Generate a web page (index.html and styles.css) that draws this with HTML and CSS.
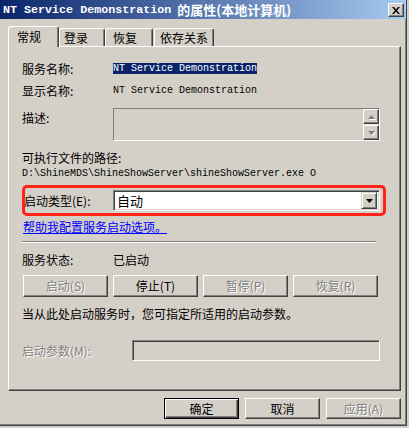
FILE: index.html
```html
<!DOCTYPE html>
<html>
<head>
<meta charset="utf-8">
<link rel="stylesheet" href="styles.css">
</head>
<body>
<div class="window">
  <div class="titlebar">
    <div class="title"><span class="t-mono">NT Service Demonstration</span><span class="t-cjk">的属性(本地计算机)</span></div>
    <div class="close"><svg width="8" height="7" viewBox="0 0 8 7"><path d="M0 0h2l2 2.5L6 0h2L5 3.5 8 7H6L4 4.5 2 7H0l3-3.5z" fill="#000"/></svg></div>
  </div>
  <div class="tabs">
    <div class="tab active w1">常规</div>
    <div class="tab w2">登录</div>
    <div class="tab w3">恢复</div>
    <div class="tab w4">依存关系</div>
  </div>
  <div class="panel">
    <div class="row r-name">
      <div class="label">服务名称:</div>
      <span class="mono sel">NT Service Demonstration</span>
    </div>
    <div class="row r-disp">
      <div class="label">显示名称:</div>
      <span class="mono">NT Service Demonstration</span>
    </div>
    <div class="row r-desc">
      <div class="label top">描述:</div>
      <div class="descbox">
        <div class="scroll">
          <div class="sbtn"><svg width="7" height="4" viewBox="0 0 7 4"><path d="M3.5 0L7 4H0z" fill="#808080"/></svg></div>
          <div class="strack"></div>
          <div class="sbtn"><svg width="7" height="4" viewBox="0 0 7 4"><path d="M0 0h7L3.5 4z" fill="#808080"/></svg></div>
        </div>
      </div>
    </div>
    <div class="line l-pathlabel">可执行文件的路径:</div>
    <div class="line l-path mono">D:\ShineMDS\ShineShowServer\shineShowServer.exe O</div>
    <div class="row r-type">
      <div class="label pad">启动类型(E):</div>
      <div class="combo">
        <span class="combo-text">自动</span>
        <div class="dbtn"><svg width="7" height="4" viewBox="0 0 7 4"><path d="M0 0h7L3.5 4z" fill="#000"/></svg></div>
      </div>
      <div class="redmark"></div>
    </div>
    <div class="line l-link"><a class="link">帮助我配置服务启动选项。</a></div>
    <div class="sep"></div>
    <div class="row r-status">
      <div class="label">服务状态:</div>
      <span>已启动</span>
    </div>
    <div class="btnrow">
      <div class="btn disabled">启动(S)</div>
      <div class="btn">停止(T)</div>
      <div class="btn disabled">暂停(P)</div>
      <div class="btn disabled">恢复(R)</div>
    </div>
    <div class="line l-hint">当从此处启动服务时，您可指定所适用的启动参数。</div>
    <div class="row r-param">
      <div class="label wide disabled-text">启动参数(M):</div>
      <div class="input"></div>
    </div>
  </div>
  <div class="footer">
    <div class="btn fbtn default">确定</div>
    <div class="btn fbtn">取消</div>
    <div class="btn fbtn disabled">应用(A)</div>
  </div>
</div>
</body>
</html>
```
FILE: styles.css
```css
* { box-sizing: border-box; }
html, body { margin: 0; padding: 0; }
body {
  width: 409px;
  height: 428px;
  overflow: hidden;
  background: #d4d0c8;
  font-family: "Noto Sans CJK SC", "Noto Sans", sans-serif;
  font-size: 12px;
  color: #000;
}
.window {
  width: 407px;
  height: 426px;
  border-right: 1px solid #404040;
  border-bottom: 1px solid #404040;
  box-shadow: inset -1px -1px 0 #808080;
}
.titlebar {
  height: 19px;
  width: 406px;
  background: linear-gradient(to right, #0a246a, #a6caf0);
  display: flex;
  align-items: center;
  justify-content: space-between;
  padding: 0 2px 0 3px;
  color: #fff;
  font-weight: bold;
  white-space: nowrap;
}
.title { display: flex; align-items: center; }
.t-mono { font-family: "Liberation Mono", monospace; font-size: 11.7px; font-weight: bold; }
.t-cjk { font-size: 13px; font-weight: bold; margin-left: 6px; }
.close {
  width: 16px;
  height: 14px;
  background: #d4d0c8;
  border: 1px solid;
  border-color: #fff #404040 #404040 #fff;
  box-shadow: inset -1px -1px 0 #808080;
  display: flex;
  align-items: center;
  justify-content: center;
  margin-top: 1px;
}
.tabs {
  display: flex;
  align-items: flex-end;
  height: 21px;
  margin: 7px 0 -1px 8px;
  position: relative;
  z-index: 1;
}
.tab {
  height: 18px;
  margin-bottom: 1px;
  border-top: 1px solid #fff;
  border-left: 1px solid #fff;
  border-right: 1px solid #404040;
  box-shadow: inset -1px 0 0 #808080;
  border-radius: 3px 3px 0 0;
  line-height: 17px;
  padding-left: 4px;
  background: #d4d0c8;
}
.tab.active {
  height: 21px;
  margin-bottom: 0;
  padding-left: 8px;
  line-height: 20px;
}
.w1 { width: 51px; }
.w2 { width: 46px; }
.w3 { width: 48px; padding-left: 7px; }
.w4 { width: 60px; margin-left: 1px; padding-left: 5px; }
.panel {
  margin-left: 8px;
  width: 393px;
  height: 345px;
  border-top: 1px solid #fff;
  border-left: 1px solid #fff;
  border-right: 1px solid #404040;
  border-bottom: 1px solid #404040;
  box-shadow: inset -1px -1px 0 #808080;
  padding: 0 0 0 13px;
  overflow: hidden;
}
.row { display: flex; align-items: center; }
.label { width: 91px; flex: none; }
.label.top { align-self: flex-start; line-height: 20px; }
.label.pad { padding-left: 2px; }
.label.wide { width: 110px; }
.mono { font-family: "Liberation Mono", monospace; font-size: 10px; }
.sel { background: #0a246a; color: #fff; line-height: 11px; display: inline-block; }
.r-name { margin-top: 11px; height: 20px; }
.r-disp { margin-top: 2px; height: 20px; }
.r-desc { margin-top: 8px; height: 33px; align-items: stretch; }
.descbox {
  width: 267px;
  border: 1px solid;
  border-color: #808080 #fff #fff #808080;
  display: flex;
  justify-content: flex-end;
}
.scroll { display: flex; flex-direction: column; width: 16px; }
.sbtn {
  height: 15px;
  border: 1px solid;
  border-color: #fff #404040 #404040 #fff;
  box-shadow: inset -1px -1px 0 #808080;
  display: flex;
  align-items: center;
  justify-content: center;
}
.sbtn svg { filter: drop-shadow(1px 1px 0 #fff); }
.strack {
  height: 1px;
  background: repeating-linear-gradient(to right, #fff 0 1px, #d4d0c8 1px 2px);
}
.line { white-space: nowrap; }
.l-pathlabel { margin-top: 9px; height: 16px; line-height: 16px; }
.l-path { height: 15px; line-height: 15px; }
.r-type { margin-top: 4px; height: 31px; width: 364px; position: relative; }
.redmark {
  position: absolute;
  inset: 0;
  border: 3px solid #ff2418;
  border-radius: 5px;
  pointer-events: none;
}
.combo {
  width: 267px;
  height: 21px;
  background: #fff;
  border: 1px solid;
  border-color: #808080 #fff #fff #808080;
  box-shadow: inset 1px 1px 0 #404040, inset -1px -1px 0 #d4d0c8;
  display: flex;
  align-items: center;
  justify-content: space-between;
  padding: 0 2px 0 3px;
}
.combo-text { font-size: 13px; line-height: 17px; }
.dbtn {
  width: 16px;
  height: 17px;
  background: #d4d0c8;
  border: 1px solid;
  border-color: #d4d0c8 #404040 #404040 #d4d0c8;
  box-shadow: inset 1px 1px 0 #fff, inset -1px -1px 0 #808080;
  display: flex;
  align-items: center;
  justify-content: center;
}
.l-link { margin-top: 3px; height: 16px; line-height: 16px; padding-left: 1px; }
.link { color: #0000ff; text-decoration: underline; }
.sep {
  margin-top: 6px;
  width: 354px;
  height: 2px;
  border-top: 1px solid #808080;
  border-bottom: 1px solid #fff;
}
.r-status { margin-top: 8px; height: 16px; }
.btnrow { display: flex; gap: 5px; margin-top: 8px; padding-left: 1px; height: 22px; }
.btn {
  width: 85px;
  height: 22px;
  border: 1px solid;
  border-color: #fff #404040 #404040 #fff;
  box-shadow: inset -1px -1px 0 #808080;
  display: flex;
  align-items: center;
  justify-content: center;
  line-height: 1;
}
.btn.disabled, .disabled-text { color: #808080; text-shadow: 1px 1px 0 #fff; }
.l-hint { margin-top: 9px; height: 16px; line-height: 16px; }
.r-param { margin-top: 18px; height: 21px; }
.r-param .label { width: 110px; }
.input {
  width: 248px;
  height: 21px;
  border: 1px solid;
  border-color: #808080 #fff #fff #808080;
  box-shadow: inset 1px 1px 0 #404040, inset -1px -1px 0 #d4d0c8;
}
.footer {
  display: flex;
  justify-content: flex-end;
  gap: 6px;
  margin-top: 7px;
  width: 401px;
}
.fbtn { width: 75px; height: 21px; }
.fbtn.default {
  border: 1px solid #000;
  box-shadow: inset 1px 1px 0 #fff, inset -1px -1px 0 #404040, inset -2px -2px 0 #808080;
}
```
